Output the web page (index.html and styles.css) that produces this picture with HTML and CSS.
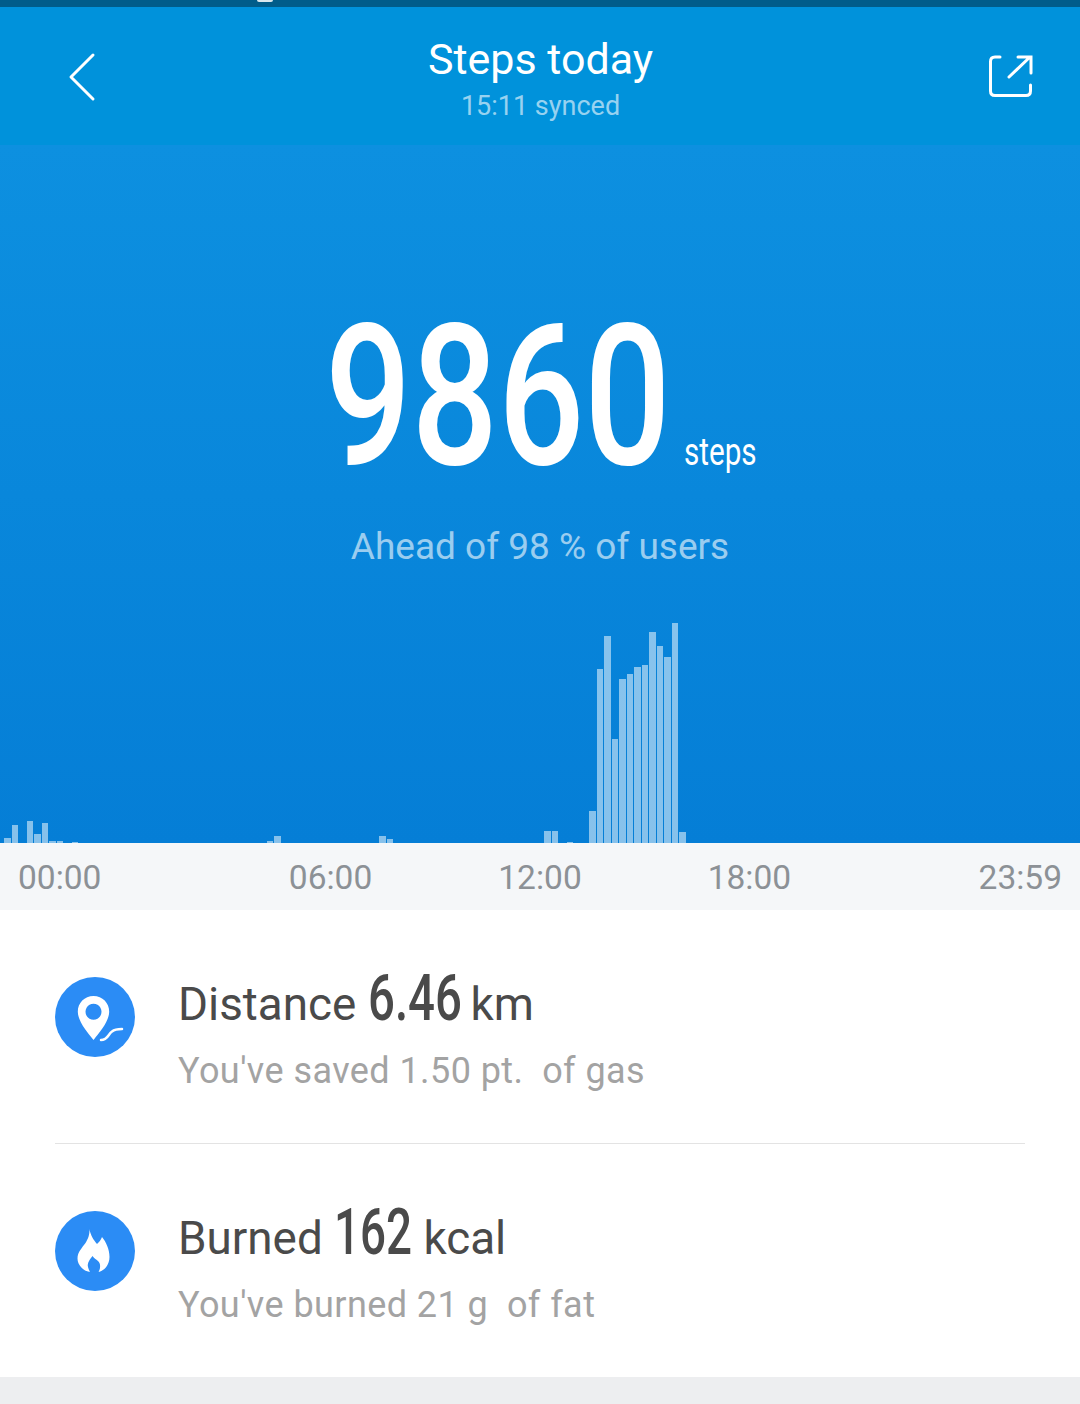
FILE: index.html
```html
<!DOCTYPE html>
<html lang="en">
<head>
    <meta charset="UTF-8">
    <title>Steps today</title>
    <link rel="stylesheet" href="styles.css">
</head>
<body>
    <div class="status-bar"><span class="status-speck"></span></div>
    <header class="top-bar">
        <svg class="back-icon" viewBox="0 0 30 50" width="30" height="50">
            <path d="M26 3 L4 25 L26 47" fill="none" stroke="#fff" stroke-width="3" stroke-linecap="round" stroke-linejoin="round"/>
        </svg>
        <div class="top-title">
            <div class="title">Steps today</div>
            <div class="synced">15:11 synced</div>
        </div>
        <svg class="share-icon" viewBox="0 0 46 46" width="46" height="46">
            <path d="M12 3 H7 Q2.5 3 2.5 7.5 V37 Q2.5 41.5 7 41.5 H38 Q42.5 41.5 42.5 37 V31" fill="none" stroke="#fff" stroke-width="3" stroke-linecap="round"/>
            <path d="M21 23 L42 3 M30 3 H43 V19" fill="none" stroke="#fff" stroke-width="3" stroke-linecap="round"/>
        </svg>
    </header>

    <section class="hero">
        <div class="count-row">
            <span class="count">9860</span>
            <span class="count-unit">steps</span>
        </div>
        <div class="rank">Ahead of 98 % of users</div>
        <div class="chart" id="chart"></div>
    </section>

    <div class="axis">
        <span>00:00</span>
        <div class="axis-mid">
            <span>06:00</span>
            <span>12:00</span>
            <span>18:00</span>
        </div>
        <span>23:59</span>
    </div>

    <section class="stats">
        <div class="stat">
            <div class="stat-icon">
                <svg viewBox="0 0 80 80" width="80" height="80">
                    <path fill-rule="evenodd" fill="#fff" d="M38.5 19 C29.5 19 22.8 26 22.8 34.7 C22.8 44 32 55 38.5 63 C45 55 54.2 44 54.2 34.7 C54.2 26 47.5 19 38.5 19 Z M38.5 26.7 a8 8 0 1 0 .01 0 Z"/>
                    <path d="M46 63 C53 63 53 57 57 54.5 C60 52 63 52 67 52" fill="none" stroke="#fff" stroke-width="2.5" stroke-linecap="round"/>
                </svg>
            </div>
            <div class="stat-text">
                <div class="stat-main">Distance <span class="stat-num num-distance">6.46</span> km</div>
                <div class="stat-sub">You've saved 1.50 pt.&nbsp; of gas</div>
            </div>
        </div>
        <div class="stat">
            <div class="stat-icon">
                <svg viewBox="0 0 80 80" width="80" height="80">
                    <path fill="#fff" d="M34.3 18 C36 25 38 28 42 33 C44 31 46 29 47 26 C51 31 54.5 38 54.5 46 C54.5 54 49 60 43.5 61 C46 57 45.5 52 43 50 C41 48.5 39 47 37.5 45 C35 48 32 52 33 56 C33.5 58 34.5 60 35 61 C28 60 22.5 54 22.5 47.5 C22.5 41 27 37 30.5 32 C33 28 35 23 34.3 18 Z"/>
                </svg>
            </div>
            <div class="stat-text">
                <div class="stat-main">Burned <span class="stat-num num-burned">162</span> kcal</div>
                <div class="stat-sub">You've burned 21 g&nbsp; of fat</div>
            </div>
        </div>
    </section>
    <div class="footer-band"></div>
    <script src="script.js"></script>
</body>
</html>
```

FILE: styles.css
```css
* {
    box-sizing: border-box;
}

html, body {
    height: 100%;
}

body {
    margin: 0;
    font-family: Roboto, "Liberation Sans", sans-serif;
    display: flex;
    flex-direction: column;
    background-color: #edeef0;
}

.status-bar {
    position: relative;
    height: 7px;
    background-color: #005c8a;
}

.status-speck {
    position: absolute;
    left: 257px;
    top: 0;
    width: 16px;
    height: 2px;
    border-radius: 0 0 8px 8px;
    background-color: rgba(255, 255, 255, 0.85);
}

.top-bar {
    height: 138px;
    padding: 0 46px 0 67px;
    display: flex;
    align-items: center;
    justify-content: space-between;
    background-color: #0092db;
}

.back-icon {
    margin-top: 1px;
    margin-right: -4px;
}

.share-icon {
    margin-top: 2px;
}

.top-title {
    margin-top: 6px;
    text-align: center;
    color: #fff;
}

.title {
    font-size: 43px;
    line-height: 50px;
}

.synced {
    margin-top: 4px;
    font-size: 27px;
    line-height: 36px;
    color: rgba(255, 255, 255, 0.6);
}

.hero {
    height: 698px;
    display: flex;
    flex-direction: column;
    align-items: center;
    background: linear-gradient(#0d90e0, #057ed6);
}

/* no condensed face is installed, so the numbers are squeezed Roboto */
.count-row {
    margin-top: 152px;
    height: 200px;
    display: flex;
    align-items: baseline;
    color: #fff;
}

.count {
    width: 340px;
    font-size: 197px;
    font-weight: 500;
    line-height: 200px;
    white-space: nowrap;
    transform: scaleX(0.772);
    transform-origin: 0 50%;
}

.count-unit {
    width: 72px;
    font-size: 38px;
    margin-left: 19px;
    transform: translateY(1px) scaleX(0.78);
    transform-origin: 0 50%;
}

.rank {
    margin-top: 27px;
    font-size: 37px;
    line-height: 46px;
    color: rgba(255, 255, 255, 0.6);
}

.chart {
    margin-top: auto;
    width: 100%;
    height: 220px;
    display: flex;
    align-items: flex-end;
    padding-left: 4px;
}

.bar {
    flex: 0 0 7.5px;
    padding-right: 1px;
}

.bar-fill {
    height: 100%;
    background-color: rgba(255, 255, 255, 0.52);
}

.axis {
    height: 67px;
    padding: 2px 18px 0;
    display: flex;
    align-items: center;
    justify-content: space-between;
    font-size: 33.5px;
    color: #8c9196;
    background-color: #f5f7f9;
}

.axis-mid {
    display: flex;
    gap: 126px;
}

.stats {
    height: 467px;
    padding: 0 55px;
    background-color: #fff;
}

.stat {
    height: 233px;
    padding-top: 67px;
    display: flex;
    align-items: flex-start;
    gap: 44px;
}

.stat + .stat {
    height: 234px;
    border-top: 1px solid #e3e3e3;
}

.stat-icon {
    flex: none;
    width: 80px;
    height: 80px;
    border-radius: 50%;
    background-color: #2b8cf5;
}

.stat-icon svg {
    display: block;
}

.stat-text {
    margin-top: -8px;
}

.stat-main {
    font-size: 45.8px;
    line-height: 60px;
    margin-left: -1px;
    color: #4a4a4a;
    white-space: nowrap;
}

.stat-num {
    display: inline-block;
    font-size: 64px;
    font-weight: 500;
    transform-origin: 0 50%;
    white-space: nowrap;
}

.num-distance {
    width: 91.5px;
    transform: scaleX(0.74);
}

.num-burned {
    width: 78px;
    transform: scaleX(0.715);
}

.stat-sub {
    margin-top: 13px;
    margin-left: -1px;
    font-size: 36px;
    line-height: 46px;
    letter-spacing: 0.43px;
    color: #a3a3a3;
}

.footer-band {
    flex: 1;
}
```

FILE: script.js
```js
// top of each bar in page pixels, the baseline sits at 843
const tops = {
    0: 838, 1: 825, 3: 821, 4: 834, 5: 823, 6: 841, 7: 841, 9: 842,
    35: 841, 36: 836, 50: 836, 51: 839,
    72: 831, 73: 831, 75: 842, 78: 811, 79: 669, 80: 636, 81: 739,
    82: 679, 83: 674, 84: 667, 85: 665, 86: 632, 87: 646, 88: 657,
    89: 623, 90: 832
};

const chart = document.getElementById('chart');
for (let i = 0; i < 144; i++) {
    const bar = document.createElement('div');
    bar.className = 'bar';
    if (tops[i]) {
        bar.style.height = (843 - tops[i]) + 'px';
        const fill = document.createElement('div');
        fill.className = 'bar-fill';
        bar.appendChild(fill);
    }
    chart.appendChild(bar);
}
```
